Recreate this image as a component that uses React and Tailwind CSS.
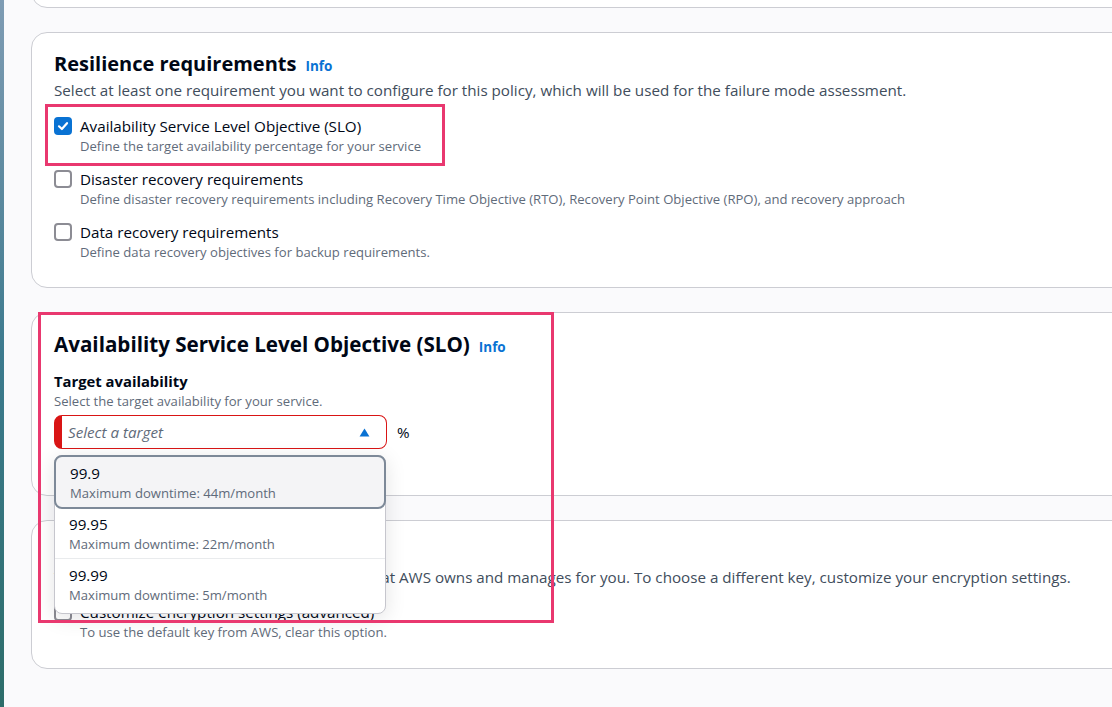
import React from "react";

const Checkbox = ({ checked }) =>
  checked ? (
    <span className="mt-[2px] flex h-[18px] w-[18px] shrink-0 items-center justify-center rounded-[4px] bg-[#0972d3]">
      <svg viewBox="0 0 14 14" className="h-[14px] w-[14px]">
        <path d="M3 7.3 L5.9 10 L11 4.2" fill="none" stroke="#fff" strokeWidth="2.2" strokeLinecap="round" strokeLinejoin="round" />
      </svg>
    </span>
  ) : (
    <span className="mt-[2px] h-[18px] w-[18px] shrink-0 rounded-[4px] border-2 border-[#8c8c94] bg-white" />
  );

const Option = ({ checked, label, hint }) => (
  <div className="flex items-start gap-[8px]">
    <Checkbox checked={checked} />
    <div>
      <div className="text-[15.2px] leading-[22px] text-[#000716]">{label}</div>
      <div className="text-[13.1px] leading-[18px] text-[#5f6b7a]">{hint}</div>
    </div>
  </div>
);

const Heading = ({ children, className }) => (
  <div className="flex items-baseline gap-[9px]">
    <h2 className={"font-bold leading-[30px] text-[#000716] " + className}>{children}</h2>
    <span className="text-[13.5px] font-bold text-[#0972d3]">Info</span>
  </div>
);

const targets = [
  { value: "99.9", downtime: "44m/month" },
  { value: "99.95", downtime: "22m/month" },
  { value: "99.99", downtime: "5m/month" },
];

const itemClass = [
  "-m-[1px] rounded-[8px] border-2 border-[#7d8998] bg-[#f4f4f6] px-[13px] py-[5px]",
  "border-b border-[#e9ebed] px-[13px] py-[5px]",
  "px-[13px] pb-[9px] pt-[5px]",
];

const TargetMenu = () => (
  <div className="absolute left-0 top-[40px] z-10 w-[332px] rounded-[8px] border border-[#c6c6cd] bg-white shadow-[0_4px_20px_1px_rgba(0,7,22,0.10)]">
    {targets.map((t, i) => (
      <div key={t.value} className={itemClass[i]}>
        <div className="pl-[1px] text-[15.2px] leading-[22px] text-[#000716]">{t.value}</div>
        <div className="pl-[1px] text-[13.1px] leading-[18px] text-[#5f6b7a]">Maximum downtime: {t.downtime}</div>
      </div>
    ))}
  </div>
);

export default function App() {
  return (
    <div className="flex h-[707px] w-[1112px] overflow-hidden bg-[#fafafc] font-['Open_Sans',sans-serif]">
      {/* desktop edge */}
      <div className="h-full w-[4px] shrink-0 bg-gradient-to-b from-[#7f9cb4] via-[#3c7a8e] to-[#2d6d6a]" />

      <div className="flex flex-col gap-[24px] pl-[27px]">
        <div className="-mt-[32px] h-[40px] w-[1120px] shrink-0 rounded-[16px] border border-[#cccdd3] bg-white" />

        {/* resilience requirements */}
        <section className="relative w-[1120px] shrink-0 rounded-[16px] border border-[#cccdd3] bg-white px-[22px] pb-[26px] pt-[16px]">
          <Heading className="text-[20px]">Resilience requirements</Heading>
          <p className="text-[15.2px] leading-[22px] text-[#414d5c]">
            Select at least one requirement you want to configure for this policy, which will be used for the failure mode assessment.
          </p>
          <div className="mt-[14px] flex flex-col gap-[13px]">
            <Option checked label="Availability Service Level Objective (SLO)" hint="Define the target availability percentage for your service" />
            <Option
              label="Disaster recovery requirements"
              hint="Define disaster recovery requirements including Recovery Time Objective (RTO), Recovery Point Objective (RPO), and recovery approach"
            />
            <Option label="Data recovery requirements" hint="Define data recovery objectives for backup requirements." />
          </div>
          <div className="pointer-events-none absolute left-[13px] top-[71px] h-[62px] w-[400px] border-[3px] border-[#e9386f]" />
        </section>

        {/* availability SLO */}
        <section className="relative w-[1120px] shrink-0 rounded-[16px] border border-[#cccdd3] bg-white px-[22px] pb-[46px] pt-[16px]">
          <Heading className="text-[20.6px]">Availability Service Level Objective (SLO)</Heading>
          <div className="mt-[11px] text-[14.8px] font-bold leading-[22px] text-[#000716]">Target availability</div>
          <div className="text-[13.1px] leading-[18px] text-[#5f6b7a]">Select the target availability for your service.</div>
          <div className="mt-[5px] flex items-center gap-[10px]">
            <div className="relative">
              <div className="flex h-[34px] w-[333px] items-center justify-between rounded-[8px] border border-l-[8px] border-[#d91515] bg-white pl-[6px] pr-[16px]">
                <span className="text-[15.2px] italic text-[#5f6b7a]">Select a target</span>
                <svg viewBox="0 0 12 10" className="h-[9px] w-[11px]">
                  <path d="M6 0.5 L11.5 9.5 L0.5 9.5 Z" fill="#0972d3" />
                </svg>
              </div>
              <TargetMenu />
            </div>
            <span className="text-[15.2px] text-[#000716]">%</span>
          </div>
          <div className="pointer-events-none absolute -top-[1px] left-[6px] z-20 h-[311px] w-[516px] border-[3px] border-[#e9386f]" />
        </section>

        {/* encryption */}
        <section className="w-[1120px] shrink-0 rounded-[16px] border border-[#cccdd3] bg-white px-[22px] pb-[27px] pt-[15px]">
          <h2 className="text-[20.3px] font-bold leading-[30px] text-[#000716]">Encryption</h2>
          <p className="text-[15.2px] leading-[22px] text-[#414d5c]">
            Your data is encrypted by default with a key that AWS owns and manages for you. To choose a different key, customize your encryption settings.
          </p>
          <div className="mt-[13px]">
            <Option label="Customize encryption settings (advanced)" hint="To use the default key from AWS, clear this option." />
          </div>
        </section>
      </div>
    </div>
  );
}
